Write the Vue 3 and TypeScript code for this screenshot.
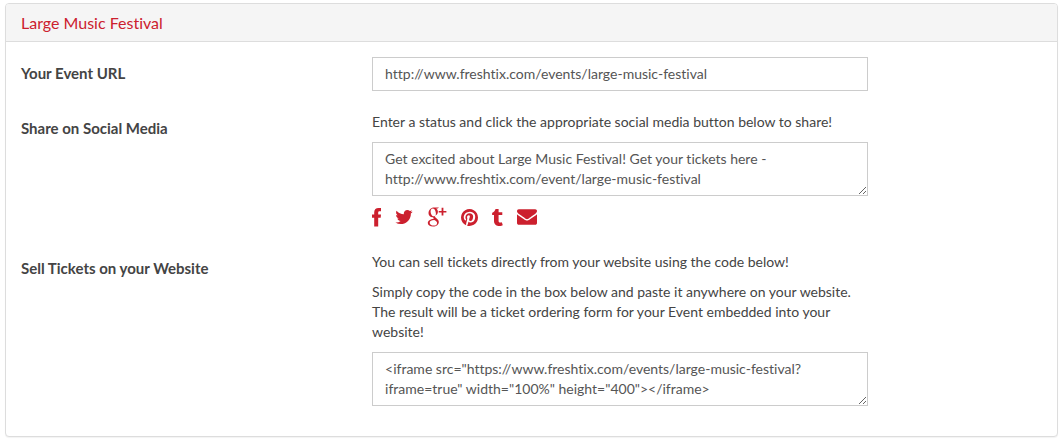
<script setup lang="ts">
import { ref } from 'vue'

interface ShareLink {
  id: string
  label: string
  viewBox: string
  width: number
  height: number
  path: string
}

const eventUrl = ref('http://www.freshtix.com/events/large-music-festival')
const status = ref(
  'Get excited about Large Music Festival! Get your tickets here - http://www.freshtix.com/event/large-music-festival',
)
const embedCode = ref(
  '<iframe src="https://www.freshtix.com/events/large-music-festival?iframe=true" width="100%" height="400"></' + 'iframe>',
)

const shareLinks: ShareLink[] = [
  {
    id: 'facebook',
    label: 'Share on Facebook',
    viewBox: '0 0 9 19',
    width: 9,
    height: 19,
    path: 'M9 .1V3.300H7.500C6.500 3.300 6.200 3.800 6.200 4.800V6.500H9L8.700 9.800H6.200V18.500H2.200V9.800H0V6.500H2.200V4.300C2.200 1.500 3.900 0 6.600 0Z',
  },
  {
    id: 'twitter',
    label: 'Share on Twitter',
    viewBox: '108 256 1576 1280',
    width: 18,
    height: 14,
    path: 'M1684 408q-67 98-162 167 1 14 1 42 0 130-38 259.500t-115.500 248.500-184.500 210.500-258 146-323 54.500q-271 0-496-145 35 4 78 4 225 0 401-138-105-2-188-64.500t-114-159.500q33 5 61 5 43 0 85-11-112-23-185.500-111.500t-73.500-205.500v-4q68 38 146 41-66-44-105-115t-39-154q0-88 44-163 121 149 294.500 238.500t371.500 99.500q-8-38-8-74 0-134 94.500-228.500t228.500-94.500q140 0 236 102 109-21 205-78-37 115-142 178 93-10 186-50z',
  },
  {
    id: 'google-plus',
    label: 'Share on Google Plus',
    viewBox: '0 0 20 20',
    width: 20,
    height: 20,
    path: 'M7 .6H12L10.700 1.500H9.200C10.400 2.400 10.900 3.400 10.900 4.700C10.900 6.200 10.200 7.200 9.200 8C8.300 8.700 8 9.100 8 9.600C8 10.200 8.500 10.600 9.400 11.300C11 12.500 11.800 13.500 11.800 15C11.800 17.600 9.600 19.600 6 19.600C3 19.600 .8 18.300 .8 16.100C.8 13.700 3.300 12.200 6.900 12.100C6.400 11.500 6.100 11 6.200 10.200L5.500 10.200C3.200 10.200 1.500 8.700 1.500 6.300C1.500 3.200 4 .6 7 .6ZM5.900 1.400C4.500 1.400 3.600 2.500 3.600 4.200C3.600 6.800 5 9.300 6.900 9.300C8.200 9.300 8.900 8.300 8.900 6.700C8.900 4.200 7.700 1.400 5.900 1.400ZM7.300 12.900C4.500 12.900 2.700 13.900 2.700 15.700C2.700 17.500 4.300 18.600 6.700 18.600C8.900 18.600 10.100 17.500 10.100 15.900C10.100 14.700 9.300 14.100 7.300 12.900ZM14.600 .8H16.400V3.900H19.400V5.500H16.400V8.500H14.600V5.500H11.700V3.900H14.600Z',
  },
  {
    id: 'pinterest',
    label: 'Share on Pinterest',
    viewBox: '128 128 1536 1536',
    width: 17,
    height: 17,
    path: 'M1664 896q0 209-103 385.500t-279.500 279.500-385.500 103q-111 0-218-32 59-93 78-164 9-34 54-211 20 39 73 67.500t114 28.500q121 0 216-68.500t147-188.500 52-270q0-114-59.500-214t-172.500-163-255-63q-105 0-196 29t-154.500 77-109 110.500-67 129.500-21.500 134q0 104 40 183t117 111q30 12 38-20 2-7 8-31t8-30q6-23-11-43-51-61-51-151 0-151 104.500-259.500t273.500-108.500q151 0 235.500 82t84.500 213q0 170-68.500 289t-175.500 119q-61 0-98-43.500t-23-104.500q8-35 26.500-93.500t30-103 11.500-75.500q0-50-27-83t-77-33q-62 0-105 57t-43 142q0 73 25 122l-99 418q-17 70-13 177-206-91-333-281t-127-423q0-209 103-385.500t279.500-279.500 385.500-103 385.500 103 279.500 279.500 103 385.500z',
  },
  {
    id: 'tumblr',
    label: 'Share on Tumblr',
    viewBox: '464 128 944 1536',
    width: 11,
    height: 17,
    path: 'M1328 1329l80 237q-23 35-111 66t-177 32q-104 2-190.500-26t-142.500-74-95-106-55.500-120-16.500-118v-544h-168v-215q72-26 129-69.500t91-90 58-102 34-99 15-88.500q1-5 4.500-8.500t7.500-3.500h244v424h333v252h-334v518q0 30 6.500 56t22.500 52.500 49.500 41.500 81.500 14q78-2 134-29z',
  },
  {
    id: 'email',
    label: 'Share by email',
    viewBox: '0 256 1792 1408',
    width: 20,
    height: 16,
    path: 'M1792 710v794q0 66-47 113t-113 47h-1472q-66 0-113-47t-47-113v-794q44 49 101 87 362 246 497 345 57 42 92.500 65.500t94.500 48 110 24.500h2q51 0 110-24.500t94.500-48 92.500-65.500q170-123 498-345 57-39 100-87zm0-294q0 79-49 151t-122 123q-376 261-468 325-10 7-42.500 30.500t-54 38-52 32.500-57.500 27-50 9h-2q-23 0-50-9t-57.500-27-52-32.500-54-38-42.500-30.500q-91-64-262-182.500t-205-142.500q-62-42-117-115.500t-55-136.500q0-78 41.500-130t118.500-52h1472q65 0 112.500 47t47.500 113z',
  },
]
</script>

<template>
  <section class="panel">
    <header class="panel-heading">
      <h1 class="panel-title">Large Music Festival</h1>
    </header>
    <form class="panel-body" @submit.prevent>
      <div class="form-row">
        <label class="row-label" for="event-url">Your Event URL</label>
        <div class="row-content">
          <input id="event-url" v-model="eventUrl" class="control" type="text" />
        </div>
      </div>
      <div class="form-row">
        <label class="row-label" for="status">Share on Social Media</label>
        <div class="row-content">
          <p class="hint">Enter a status and click the appropriate social media button below to share!</p>
          <textarea id="status" v-model="status" class="control area" rows="2"></textarea>
          <nav class="share" aria-label="Share">
            <a v-for="link in shareLinks" :key="link.id" class="share-link" href="#" :aria-label="link.label">
              <svg :viewBox="link.viewBox" :width="link.width" :height="link.height" aria-hidden="true">
                <path :d="link.path" fill="currentColor" fill-rule="evenodd" />
              </svg>
            </a>
          </nav>
        </div>
      </div>
      <div class="form-row">
        <label class="row-label" for="embed-code">Sell Tickets on your Website</label>
        <div class="row-content">
          <p class="hint">You can sell tickets directly from your website using the code below!</p>
          <p class="hint">
            Simply copy the code in the box below and paste it anywhere on your website. The result will be a ticket
            ordering form for your Event embedded into your website!
          </p>
          <textarea id="embed-code" v-model="embedCode" class="control area" rows="2"></textarea>
        </div>
      </div>
    </form>
  </section>
</template>

<style>
body {
  margin: 0;
  background: #fff;
}
</style>

<style scoped>
.panel {
  margin: 3px 4px 5px 5px;
  border: 1px solid #ddd;
  border-radius: 4px;
  background: #fff;
  box-shadow: 0 1px 1px rgba(0, 0, 0, 0.05);
  color: #444;
  font-family: Lato, 'Liberation Sans', sans-serif;
  font-size: 14px;
  font-variant-ligatures: none;
  line-height: 20px;
}

.panel-heading {
  padding: 10px 15px 9px;
  border-bottom: 1px solid #ddd;
  border-radius: 3px 3px 0 0;
  background: #f5f5f5;
}

.panel-title {
  margin: 0;
  color: #cc202e;
  font-size: 16px;
  font-weight: 400;
  line-height: 18px;
}

.panel-body {
  display: flex;
  flex-direction: column;
  gap: 21px;
  padding: 15px 0 30px;
}

.form-row {
  display: grid;
  grid-template-columns: 33.4% 50%;
  align-items: start;
}

.row-label {
  padding: 6px 15px 0;
  font-size: 15px;
  font-weight: 700;
}

.row-content {
  min-width: 0;
  padding: 0 15px;
}

.hint {
  margin: 0 0 10px;
}

.control {
  display: block;
  box-sizing: border-box;
  width: 100%;
  margin: 0;
  padding: 6px 12px;
  border: 1px solid #ccc;
  border-radius: 0;
  background: #fff;
  color: #555;
  font: inherit;
  font-variant-ligatures: none;
}

.area {
  resize: both;
  overflow: auto;
}

.share {
  display: flex;
  align-items: center;
  gap: 14px;
  height: 22px;
  padding: 10px 0 3px;
}

.share-link {
  display: flex;
  color: #cc202e;
}
</style>
